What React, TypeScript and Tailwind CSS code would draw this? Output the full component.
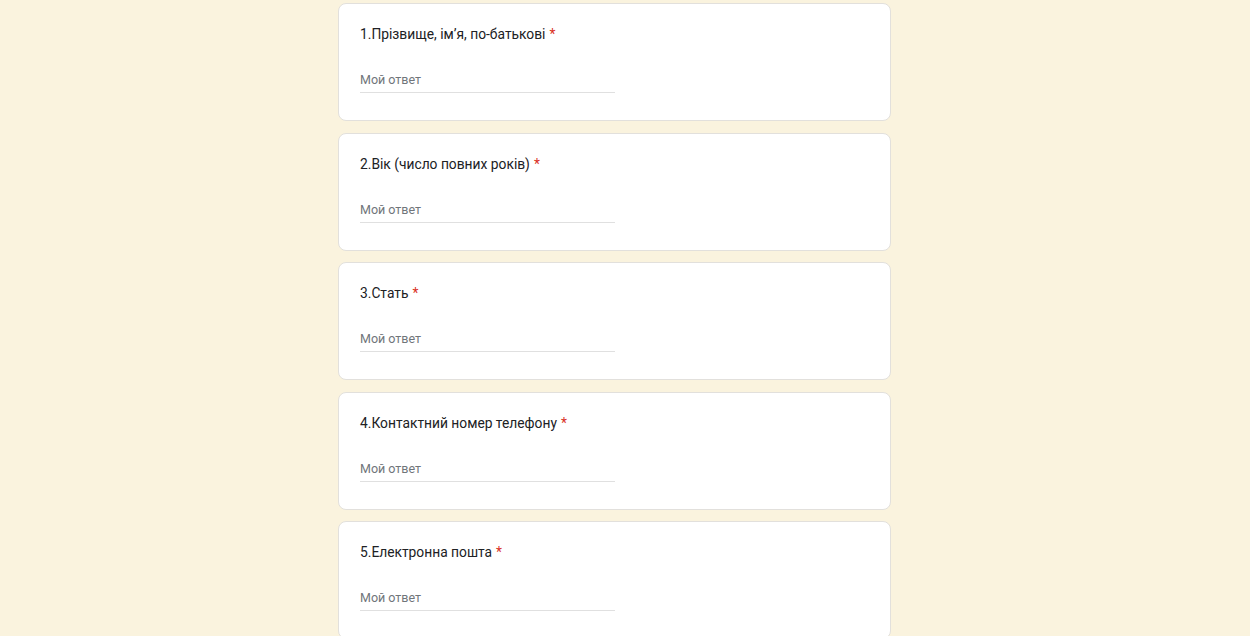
const questions = [
  '1.Прізвище, ім\u2019я, по-батькові',
  '2.Вік (число повних років)',
  '3.Стать',
  '4.Контактний номер телефону',
  '5.Електронна пошта',
];

function QuestionCard({ title }: { title: string }) {
  return (
    <div className="h-[118px] shrink-0 box-border bg-white rounded-lg border border-[#e2e0dc] px-[21px] pt-[18px]">
      <div className="text-[13.8px] leading-[24px] text-[#202124]">
        {title}
        <span className="text-[#d93025] ml-1">*</span>
      </div>
      <div className="mt-[24px] w-[255px] border-b border-[#e0e0e0] pb-[2px] text-[12.5px] leading-[20px] text-[#70757a]">
        Мой ответ
      </div>
    </div>
  );
}

export default function App() {
  return (
    <div
      className="w-full h-[636px] overflow-hidden bg-[#faf3de]"
      style={{ fontFamily: 'Roboto, "Noto Sans", sans-serif' }}
    >
      <div className="w-[553px] ml-[338px] pt-[3px] flex flex-col gap-[11.5px]">
        {questions.map((q) => (
          <QuestionCard key={q} title={q} />
        ))}
      </div>
    </div>
  );
}
